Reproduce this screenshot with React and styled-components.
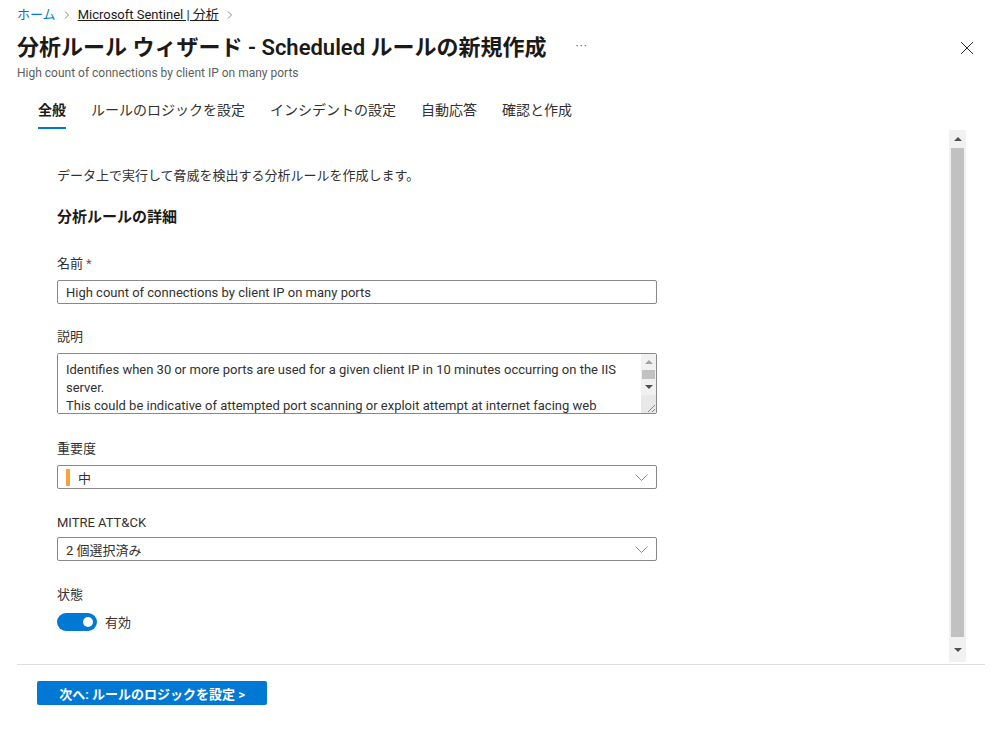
import React from "react";
import styled, { createGlobalStyle } from "styled-components";

const Global = createGlobalStyle`
  html, body {
    margin: 0;
    padding: 0;
    background: #fff;
  }
  body {
    font-family: "Segoe UI", Roboto, "Noto Sans CJK JP", sans-serif;
    color: #323130;
  }
`;

const Page = styled.div`
  width: 999px;
  height: 752px;
  overflow: hidden;
  display: flex;
  flex-direction: column;
`;

const Header = styled.div`
  padding: 6px 14px 0 17px;
`;

const Crumbs = styled.div`
  display: flex;
  align-items: center;
  gap: 7px;
  font-size: 13px;
  line-height: 18px;
`;

const Crumb = styled.a`
  color: ${({ $dark }) => ($dark ? "#1b1a19" : "#0078d4")};
  text-decoration: ${({ $dark }) => ($dark ? "underline" : "none")};
  cursor: pointer;
`;

const Sep = styled.span`
  display: flex;
  align-items: center;
`;

const TitleRow = styled.div`
  display: flex;
  align-items: center;
  margin-top: 9px;
  height: 30px;
`;

const Title = styled.h1`
  margin: 0;
  font-size: 22px;
  font-weight: 600;
  line-height: 30px;
  color: #1b1a19;
  white-space: nowrap;
`;

const More = styled.span`
  margin-left: 29px;
  color: #605e5c;
  font-size: 12px;
  letter-spacing: 1px;
  line-height: 1;
  margin-top: -4px;
`;

const Close = styled.button`
  margin-left: auto;
  margin-right: 10px;
  background: none;
  border: 0;
  padding: 0;
  width: 16px;
  height: 16px;
  display: flex;
  align-items: center;
  justify-content: center;
  cursor: pointer;
`;

const Subtitle = styled.div`
  margin-top: 2px;
  font-size: 12px;
  line-height: 16px;
  color: #605e5c;
`;

const Tabs = styled.div`
  display: flex;
  gap: 25px;
  margin-top: 19px;
  padding-left: 21px;
`;

const Tab = styled.div`
  font-size: 14px;
  line-height: 20px;
  padding-bottom: 7px;
  color: ${({ $active }) => ($active ? "#1b1a19" : "#323130")};
  font-weight: ${({ $active }) => ($active ? 600 : 400)};
  border-bottom: 2px solid ${({ $active }) => ($active ? "#0078d4" : "transparent")};
  cursor: pointer;
`;

const Body = styled.div`
  margin: 1px 0 0 17px;
  width: 949px;
  height: 532px;
  display: flex;
`;

const Content = styled.div`
  flex: 1;
  overflow: hidden;
  padding: 37px 0 0 40px;
`;

/* scrollbar pieces, shared by the page body and the textarea */
const Bar = styled.div`
  width: ${({ $w }) => $w}px;
  background: #f1f1f1;
  display: flex;
  flex-direction: column;
  align-items: center;
`;

const ArrowBox = styled.div`
  height: ${({ $h }) => $h}px;
  width: 100%;
  display: flex;
  align-items: center;
  justify-content: center;
  flex-shrink: 0;
`;

const Arrow = styled.span`
  width: 0;
  height: 0;
  border-left: 4px solid transparent;
  border-right: 4px solid transparent;
  ${({ $down, $color }) =>
    $down
      ? `border-top: 4px solid ${$color};`
      : `border-bottom: 4px solid ${$color};`}
`;

const Thumb = styled.div`
  width: ${({ $w }) => $w}px;
  background: #c1c1c1;
  flex: ${({ $grow }) => ($grow ? 1 : "none")};
  height: ${({ $h }) => ($h ? `${$h}px` : "auto")};
`;

const Intro = styled.p`
  margin: 0;
  font-size: 13px;
  line-height: 18px;
  color: #323130;
`;

const Section = styled.h2`
  margin: 22px 0 0;
  font-size: 15px;
  font-weight: 600;
  line-height: 20px;
  color: #1b1a19;
`;

const Field = styled.div`
  margin-top: ${({ $top }) => $top || 25}px;
`;

const Label = styled.div`
  font-size: 13px;
  line-height: 18px;
  color: #323130;
  margin-bottom: ${({ $gap }) => $gap ?? 7}px;
`;

const Req = styled.span`
  color: #605e5c;
  margin-left: 3px;
`;

const TextInput = styled.input`
  box-sizing: border-box;
  width: 600px;
  height: 24px;
  border: 1px solid #8a8886;
  border-radius: 2px;
  padding: 0 8px;
  font: inherit;
  font-size: 13px;
  color: #323130;
  outline: none;
`;

const TextBox = styled.div`
  box-sizing: border-box;
  width: 600px;
  height: 61px;
  border: 1px solid #8a8886;
  border-radius: 2px;
  display: flex;
`;

const TextArea = styled.textarea`
  flex: 1;
  border: 0;
  padding: 7px 8px 0;
  font: inherit;
  font-size: 13px;
  line-height: 18px;
  color: #323130;
  outline: none;
  overflow: hidden;
  resize: none;
`;

const Grip = styled.div`
  margin-top: auto;
  width: 100%;
  height: 19px;
  background: #e8e8e8;
  display: flex;
  align-items: flex-end;
  justify-content: flex-end;
`;

const Select = styled.div`
  box-sizing: border-box;
  width: 600px;
  height: 24px;
  border: 1px solid #8a8886;
  border-radius: 2px;
  padding: 0 8px 0 8px;
  display: flex;
  align-items: center;
  gap: 8px;
  font-size: 13px;
  color: #323130;
  cursor: pointer;
`;

const SelectText = styled.span`
  flex: 1;
`;

const Severity = styled.span`
  width: 4px;
  height: 17px;
  background: ${({ $color }) => $color};
`;

const ToggleRow = styled.div`
  display: flex;
  align-items: center;
  gap: 8px;
  font-size: 13px;
`;

const Switch = styled.span`
  box-sizing: border-box;
  width: 40px;
  height: 18px;
  border-radius: 9px;
  background: #0078d4;
  display: flex;
  align-items: center;
  justify-content: flex-end;
  padding-right: 4px;
`;

const Knob = styled.span`
  width: 10px;
  height: 10px;
  border-radius: 50%;
  background: #fff;
`;

const Divider = styled.div`
  margin: 2px 14px 0 17px;
  border-top: 1px solid #e1dfdd;
`;

const Footer = styled.div`
  padding: 16px 0 0 37px;
`;

const Primary = styled.button`
  width: 230px;
  height: 24px;
  border: 0;
  border-radius: 2px;
  background: #0078d4;
  color: #fff;
  font: inherit;
  font-size: 13px;
  font-weight: 600;
  cursor: pointer;
`;

const Chevron = () => (
  <svg width="8" height="10" viewBox="0 0 8 10">
    <path d="M2 1.5 L5.5 5 L2 8.5" fill="none" stroke="#8a8886" strokeWidth="1" />
  </svg>
);

const Down = () => (
  <svg width="13" height="7" viewBox="0 0 13 7">
    <path d="M0.5 0.5 L6.5 6.5 L12.5 0.5" fill="none" stroke="#8a8886" strokeWidth="1" />
  </svg>
);

const tabs = ["全般", "ルールのロジックを設定", "インシデントの設定", "自動応答", "確認と作成"];

const desc =
  "Identifies when 30 or more ports are used for a given client IP in 10 minutes occurring on the IIS server.\nThis could be indicative of attempted port scanning or exploit attempt at internet facing web applications.\nThis could also simply indicate a misconfigured service or device.";

export default function App() {
  return (
    <Page>
      <Global />
      <Header>
        <Crumbs>
          <Crumb>ホーム</Crumb>
          <Sep><Chevron /></Sep>
          <Crumb $dark>Microsoft Sentinel | 分析</Crumb>
          <Sep><Chevron /></Sep>
        </Crumbs>
        <TitleRow>
          <Title>分析ルール ウィザード - Scheduled ルールの新規作成</Title>
          <More>···</More>
          <Close aria-label="閉じる">
            <svg width="14" height="14" viewBox="0 0 14 14">
              <path d="M1 1 L13 13 M13 1 L1 13" stroke="#323130" strokeWidth="1" />
            </svg>
          </Close>
        </TitleRow>
        <Subtitle>High count of connections by client IP on many ports</Subtitle>
        <Tabs>
          {tabs.map((t, i) => (
            <Tab key={t} $active={i === 0}>{t}</Tab>
          ))}
        </Tabs>
      </Header>

      <Body>
        <Content>
          <Intro>データ上で実行して脅威を検出する分析ルールを作成します。</Intro>
          <Section>分析ルールの詳細</Section>

          <Field $top={28}>
            <Label $gap={7}>名前<Req>*</Req></Label>
            <TextInput defaultValue="High count of connections by client IP on many ports" />
          </Field>

          <Field $top={24}>
            <Label>説明</Label>
            <TextBox>
              <TextArea defaultValue={desc} />
              <Bar $w={15}>
                <ArrowBox $h={16}><Arrow $color="#a3a3a3" /></ArrowBox>
                <Thumb $w={13} $h={9} />
                <ArrowBox $h={16}><Arrow $down $color="#505050" /></ArrowBox>
                <Grip>
                  <svg width="10" height="10" viewBox="0 0 10 10">
                    <path d="M9 2 L2 9 M9 6 L6 9" stroke="#8a8a8a" strokeWidth="1" />
                  </svg>
                </Grip>
              </Bar>
            </TextBox>
          </Field>

          <Field $top={26}>
            <Label>重要度</Label>
            <Select>
              <Severity $color="#f7a23b" />
              <SelectText>中</SelectText>
              <Down />
            </Select>
          </Field>

          <Field $top={25}>
            <Label $gap={5}>MITRE ATT&amp;CK</Label>
            <Select>
              <SelectText>2 個選択済み</SelectText>
              <Down />
            </Select>
          </Field>

          <Field $top={25}>
            <Label $gap={8}>状態</Label>
            <ToggleRow>
              <Switch><Knob /></Switch>
              有効
            </ToggleRow>
          </Field>
        </Content>
        <Bar $w={17}>
          <ArrowBox $h={18}><Arrow $color="#505050" /></ArrowBox>
          <Thumb $w={13} $grow />
          <ArrowBox $h={25}><Arrow $down $color="#505050" /></ArrowBox>
        </Bar>
      </Body>

      <Divider />
      <Footer>
        <Primary>次へ: ルールのロジックを設定 &gt;</Primary>
      </Footer>
    </Page>
  );
}
